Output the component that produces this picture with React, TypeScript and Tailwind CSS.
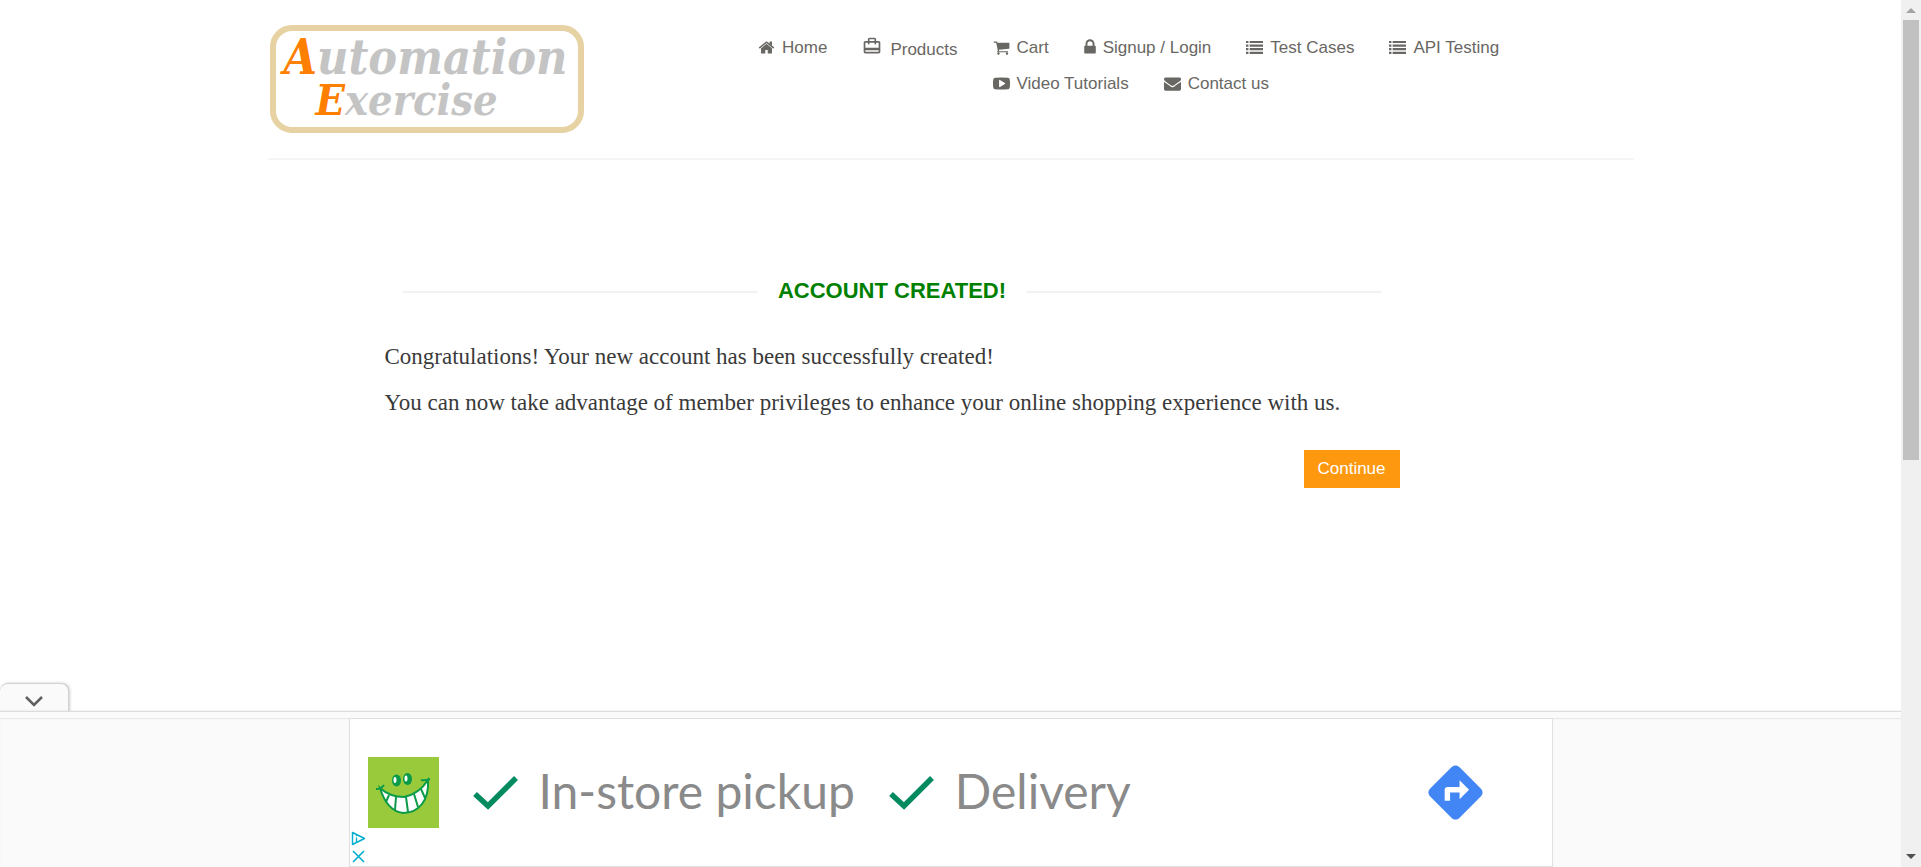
import type { ReactNode } from "react";
import { MdCardTravel, MdDirections } from "react-icons/md";

const glyphs = {
  home: "M1472 992v480q0 26-19 45t-45 19h-384v-384h-256v384h-384q-26 0-45-19t-19-45v-480q0-1 .5-3t.5-3l575-474 575 474q1 2 1 6zm223-69l-62 74q-8 9-21 11h-3q-13 0-21-7l-692-577-692 577q-12 8-24 7-13-2-21-11l-62-74q-8-10-7-23.5t11-21.5l719-599q32-26 76-26t76 26l244 204v-195q0-14 9-23t23-9h192q14 0 23 9t9 23v408l219 182q10 8 11 21.5t-7 23.5z",
  cart: "M704 1536q0 52-38 90t-90 38-90-38-38-90 38-90 90-38 90 38 38 90zm896 0q0 52-38 90t-90 38-90-38-38-90 38-90 90-38 90 38 38 90zm128-1088v512q0 24-16.5 42.5t-40.5 21.5l-1044 122q13 60 13 70 0 16-24 64h920q26 0 45 19t19 45-19 45-45 19h-1024q-26 0-45-19t-19-45q0-11 8-31.5t16-36 21.5-40 15.5-29.5l-177-823h-204q-26 0-45-19t-19-45 19-45 45-19h256q16 0 28.5 6.5t19.5 15.5 13 24.5 8 26 5.5 29.5 4.5 26h1201q26 0 45 19t19 45z",
  lock: "M640 768h512v-192q0-106-75-181t-181-75-181 75-75 181v192zm832 96v576q0 40-28 68t-68 28h-960q-40 0-68-28t-28-68v-576q0-40 28-68t68-28h32v-192q0-184 132-316t316-132 316 132 132 316v192h32q40 0 68 28t28 68z",
  list: "M0 200h256v230H0zM384 200h1408v230H384zM0 580h256v230H0zM384 580h1408v230H384zM0 960h256v230H0zM384 960h1408v230H384zM0 1340h256v230H0zM384 1340h1408v230H384z",
  video:
    "M1280 896q0-37-30-54l-512-320q-31-20-65-2-33 18-33 56v640q0 38 33 56 16 8 31 8 20 0 34-10l512-320q30-17 30-54zm512 0q0 96-1 150t-8.5 136.5-22.5 147.5q-16 73-69 123t-124 58q-222 25-671 25t-671-25q-71-8-124.5-58t-69.5-123q-14-65-21.5-147.5t-8.5-136.5-1-150 1-150 8.5-136.5 22.5-147.5q16-73 69-123t124-58q222-25 671-25t671 25q71 8 124.5 58t69.5 123q14 65 21.5 147.5t8.5 136.5 1 150z",
  mail: "M1792 710v794q0 66-47 113t-113 47h-1472q-66 0-113-47t-47-113v-794q44 49 101 87 362 246 497 345 57 42 92.5 65.5t94.5 48 110 24.5h2q51 0 110-24.5t94.5-48 92.5-65.5q170-123 498-345 57-39 100-87zm0-294q0 79-49 151t-122 123q-376 261-468 325-10 7-42.5 31t-54 38.5-52 32.5-57.5 27-50 9h-2q-23 0-50-9t-57.5-27-52-32.5-54-38.5-42.5-31q-91-64-262-182.5t-205-142.5q-62-42-117-115.5t-55-136.5q0-78 41.5-130t118.5-52h1472q65 0 112.5 47t47.5 113z",
};

function Glyph({ name }: { name: keyof typeof glyphs }) {
  const narrow = name === "lock";
  return (
    <svg
      viewBox={narrow ? "320 0 1152 1792" : "0 0 1792 1792"}
      className={narrow ? "mb-[2px] h-[18px] w-3" : "mb-[2px] h-[17px] w-[17px]"}
      fill="currentColor"
      aria-hidden="true"
    >
      <path d={glyphs[name]} />
    </svg>
  );
}

function NavItem({ icon, children }: { icon: keyof typeof glyphs; children: ReactNode }) {
  return (
    <li>
      <a href="#" className="flex h-6 items-center gap-[7px]">
        <Glyph name={icon} />
        {children}
      </a>
    </li>
  );
}

function Logo() {
  return (
    <a
      href="#"
      className="mt-[25px] block h-[108px] w-[314px] rounded-[22px] border-6 border-[#e6d2a2] font-['DejaVu_Serif_Condensed','DejaVu_Serif',serif] leading-[43px] font-bold text-[#c4c4c4] italic"
    >
      <span className="block pt-[5px] pl-2 text-[48px]">
        <span className="text-[#ff8000]">A</span>utomation
      </span>
      <span className="block pl-10 text-[43px]">
        <span className="text-[#ff8000]">E</span>xercise
      </span>
    </a>
  );
}

function Smiley() {
  return (
    <svg viewBox="0 0 71 71" className="h-[71px] w-[71px] shrink-0" aria-hidden="true">
      <rect width="71" height="71" fill="#98ca3c" />
      <ellipse cx="28.5" cy="23.500" rx="4.500" ry="6" fill="#0a9a48" />
      <ellipse cx="39.500" cy="22" rx="4.500" ry="6" fill="#0a9a48" />
      <ellipse cx="27" cy="23" rx="1.500" ry="3" fill="#fff" />
      <ellipse cx="38" cy="21.500" rx="1.500" ry="3" fill="#fff" />
      <path
        d="M12 31Q22 40 36 40Q51 37 60 23Q61 38 54 47Q47 56 35 56Q19 54 12 31Z"
        fill="#fff"
        stroke="#0a9a48"
        strokeWidth="2"
      />
      <path
        d="M8 32Q13 32 16 28M53 23Q57 24 62 22M21 38L18 45M28 40L27 53M38 40L40 55M46 37L50 50M53 32L57 41"
        fill="none"
        stroke="#0a9a48"
        strokeWidth="2"
      />
    </svg>
  );
}

function Perk({ children }: { children: ReactNode }) {
  return (
    <span className="flex items-center gap-[21px]">
      <svg viewBox="0 0 45 35" className="h-[35px] w-[45px]" aria-hidden="true">
        <path d="M2 19L15 31L43 3" fill="none" stroke="#048a60" strokeWidth="5.5" />
      </svg>
      <span className="pb-1">{children}</span>
    </span>
  );
}

export default function App() {
  return (
    <div className="flex min-h-screen bg-white font-['Liberation_Sans',Arial,sans-serif] text-[17px] text-[#696763]">
      <div className="flex min-w-0 flex-1 flex-col">
        <header className="mx-auto flex w-full max-w-[1366px] border-b-2 border-[#f5f5f5] pb-[25px]">
          <div className="w-1/3 shrink-0 pl-[2px]">
            <Logo />
          </div>
          <nav className="flex flex-1 justify-end pt-9 pr-[133px] leading-6">
            <ul className="flex gap-[35px]">
              <NavItem icon="home">Home</NavItem>
              <li>
                <a href="#" className="flex items-start gap-2">
                  <MdCardTravel className="h-5 w-5" aria-hidden="true" />
                  <span className="pt-[2px]">Products</span>
                </a>
              </li>
            </ul>
            <ul className="ml-[35px] flex max-w-[508px] flex-wrap content-start gap-x-[35px] gap-y-3">
              <NavItem icon="cart">Cart</NavItem>
              <NavItem icon="lock">Signup / Login</NavItem>
              <NavItem icon="list">Test Cases</NavItem>
              <NavItem icon="list">API Testing</NavItem>
              <NavItem icon="video">Video Tutorials</NavItem>
              <NavItem icon="mail">Contact us</NavItem>
            </ul>
          </nav>
        </header>

        <main className="mx-auto w-full max-w-[1366px] px-[117px] pt-[115px]">
          <div className="max-w-[1015px]">
            <h2 className="flex items-center gap-5 px-[18px] text-[22px] leading-8 font-bold text-[#008000]">
              <span className="mt-[2px] h-[2px] flex-1 bg-[#f2f2f2]" />
              ACCOUNT CREATED!
              <span className="mt-[2px] h-[2px] flex-1 bg-[#f2f2f2]" />
            </h2>
            <div className="mt-[34px] flex flex-col gap-[14px] font-['Liberation_Serif',serif] text-[23px] leading-8 text-[#3a3a3a]">
              <p>Congratulations! Your new account has been successfully created!</p>
              <p>
                You can now take advantage of member privileges to enhance your online shopping
                experience with us.
              </p>
            </div>
            <div className="mt-[31px] flex justify-end">
              <button type="button" className="h-[38px] w-24 bg-[#fe980f] text-white">
                Continue
              </button>
            </div>
          </div>
        </main>

        <aside className="mt-auto">
          <button
            type="button"
            aria-label="Collapse advertisement"
            className="flex h-7 w-[69px] items-center justify-center rounded-t-lg border-t border-r border-[#d2d2d2] bg-[#fafafa] text-[#5f5f5f] shadow-[1px_0_3px_#0003]"
          >
            <svg viewBox="0 0 18 12" className="mt-2 h-3 w-[18px]" aria-hidden="true">
              <path d="M1 1L9 9L17 1" fill="none" stroke="currentColor" strokeWidth="2.500" />
            </svg>
          </button>
          <div className="h-[7px] border-t border-[#dcdcdc] bg-[#fafafa] shadow-[0_-1px_2px_#0000000d]" />
          <div className="bg-[#fafafa] shadow-[inset_0_1px_1px_#e6e6e6]">
            <section className="relative mx-auto flex h-[149px] max-w-[1204px] items-center border border-[#e0e0e0] bg-white pr-16 pl-[18px] font-['Lato',sans-serif] text-[48px] leading-[58px] text-[#8a8a8a]">
              <Smiley />
              <div className="ml-[34px] flex gap-[34px]">
                <Perk>In-store pickup</Perk>
                <Perk>Delivery</Perk>
              </div>
              <a href="#" aria-label="Directions" className="ml-auto text-[#4285f4]">
                <MdDirections className="h-[65px] w-[65px]" />
              </a>
              <div className="absolute bottom-[3px] left-[1px] flex flex-col items-center gap-1 text-[#00aecd]">
                <a href="#" aria-label="About this advertisement">
                  <svg viewBox="0 0 15 15" className="h-[15px] w-[15px]" fill="none" stroke="currentColor">
                    <path d="M1.500 1.500V13.500L13.500 7.500Z" strokeWidth="1.500" strokeLinejoin="round" />
                    <path d="M5.500 6.500V11M5.500 4V5.300" strokeWidth="1.300" />
                  </svg>
                </a>
                <button type="button" aria-label="Close advertisement">
                  <svg viewBox="0 0 13 13" className="h-[13px] w-[13px]" fill="none" stroke="currentColor">
                    <path d="M1 1L12 12M12 1L1 12" strokeWidth="1.600" />
                  </svg>
                </button>
              </div>
            </section>
          </div>
        </aside>
      </div>

      <div className="flex w-5 shrink-0 flex-col items-center bg-[#f0f0f0]" aria-hidden="true">
        <svg viewBox="0 0 20 20" className="h-5 w-5" fill="#a3a3a3">
          <path d="M5 13L10 8L15 13Z" />
        </svg>
        <div className="h-[440px] w-4 bg-[#c1c1c1]" />
        <svg viewBox="0 0 20 20" className="mt-auto h-5 w-5" fill="#505050">
          <path d="M5 7L10 12L15 7Z" />
        </svg>
      </div>
    </div>
  );
}
